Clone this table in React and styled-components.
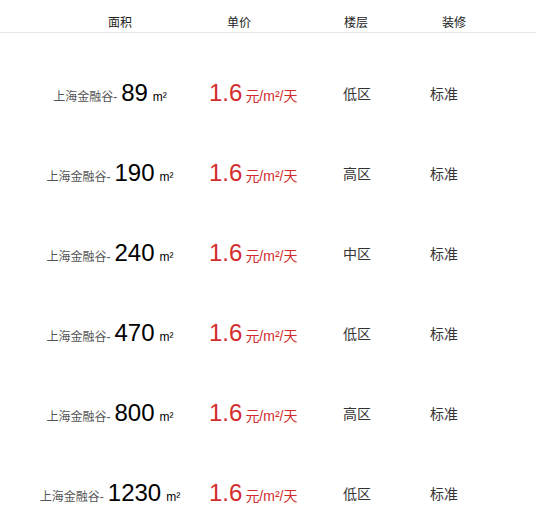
import React from "react";
import styled, { createGlobalStyle } from "styled-components";

const Global = createGlobalStyle`
  html, body { margin: 0; padding: 0; background: #fff; }
  body { font-family: "Liberation Sans", Arial, "Noto Sans CJK SC", sans-serif; }
`;

const Page = styled.div`
  width: 536px;
`;

const Header = styled.div`
  display: grid;
  grid-template-columns: 119px 117px 98px 1fr;
  padding-left: 108px;
  align-items: end;
  border-bottom: 1px solid #e6e6e6;
  box-sizing: border-box;
  height: 33px;
`;

const HeadCell = styled.div`
  font-size: 12px;
  line-height: 14px;
  color: #222;
  padding-bottom: 2px;
`;

const List = styled.div`
  padding-top: 20px;
`;

const Row = styled.div`
  display: grid;
  grid-template-columns: 180px 143px 87px 1fr;
  padding-left: 20px;
  height: 80px;
  align-items: center;
`;

const AreaCell = styled.div`
  display: flex;
  justify-content: center;
  align-items: baseline;
  white-space: nowrap;
`;

const Place = styled.span`
  font-size: 12px;
  color: #555;
`;

const Size = styled.span`
  font-size: 24px;
  color: #000;
  margin: 0 5px 0 4px;
`;

const Unit = styled.span`
  font-size: 12px;
  color: #000;
`;

const PriceCell = styled.div`
  display: flex;
  align-items: baseline;
  padding-left: 9px;
  color: #d22c2c;
  white-space: nowrap;
`;

const Price = styled.span`
  font-size: 24px;
  margin-right: 3px;
`;

const PriceUnit = styled.span`
  font-size: 14px;
`;

const TextCell = styled.div`
  font-size: 14px;
  color: #333;
`;

const rows = [
  { area: 89, floor: "低区" },
  { area: 190, floor: "高区" },
  { area: 240, floor: "中区" },
  { area: 470, floor: "低区" },
  { area: 800, floor: "高区" },
  { area: 1230, floor: "低区" },
];

export default function App() {
  return (
    <Page>
      <Global />
      <Header>
        <HeadCell>面积</HeadCell>
        <HeadCell>单价</HeadCell>
        <HeadCell>楼层</HeadCell>
        <HeadCell>装修</HeadCell>
      </Header>
      <List>
        {rows.map((r, i) => (
          <Row key={i}>
            <AreaCell>
              <Place>上海金融谷-</Place>
              <Size>{r.area}</Size>
              <Unit>m²</Unit>
            </AreaCell>
            <PriceCell>
              <Price>1.6</Price>
              <PriceUnit>元/m²/天</PriceUnit>
            </PriceCell>
            <TextCell>{r.floor}</TextCell>
            <TextCell>标准</TextCell>
          </Row>
        ))}
      </List>
    </Page>
  );
}
